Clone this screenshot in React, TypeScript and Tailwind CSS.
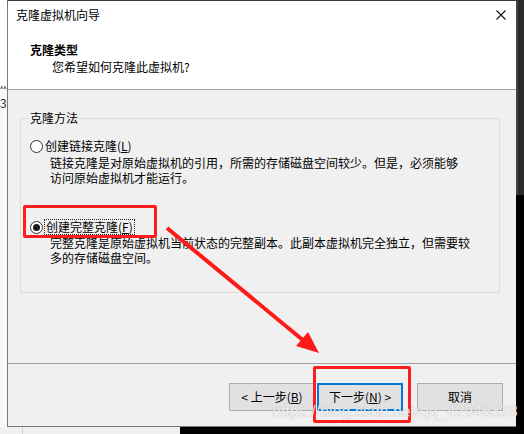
import React from "react";

const cjk = "font-['Noto_Sans_CJK_SC','Microsoft_YaHei',sans-serif]";

function Radio({ checked }: { checked?: boolean }) {
    return (
        <span className="w-[13px] h-[13px] rounded-full border border-[#333] bg-white flex items-center justify-center shrink-0">
            {checked && <span className="w-[7px] h-[7px] rounded-full bg-[#1a1a1a]" />}
        </span>
    );
}

function Btn({ children, primary }: { children: React.ReactNode; primary?: boolean }) {
    return (
        <div
            className={
                primary
                    ? "w-[86px] h-[28px] flex items-center justify-center bg-[#e1e1e1] border-2 border-[#0078d7] text-[12px] leading-[16px] text-black"
                    : "w-[86px] h-[28px] flex items-center justify-center bg-[#e1e1e1] border border-[#adadad] text-[12px] leading-[16px] text-black"
            }
        >
            {children}
        </div>
    );
}

export default function App() {
    return (
        <div className={`relative w-[524px] h-[434px] overflow-hidden bg-black ${cjk}`}>
            <div className="flex h-[427px]">
                {/* window behind, left side */}
                <div className="w-[7px] bg-white overflow-hidden text-[12px] leading-[16px] text-[#333] pt-[75px] whitespace-nowrap">
                    <div className="h-[14px] border-b border-[#a0a0a0]">...</div>
                    <div className="bg-[#f7f7f7] pt-[6px] h-[340px]">3..</div>
                </div>

                {/* dialog */}
                <div className="w-[509px] flex flex-col border-l border-b border-[#7a7a7a] border-t border-t-[#3a3a3a] bg-[#f0f0f0] text-black">
                    <div className="h-[89px] bg-white border-b border-[#a0a0a0] relative">
                        <div className="pl-[8px] pt-[6px] text-[12px] leading-[16px]">克隆虚拟机向导</div>
                        <svg className="absolute right-[10px] top-[9px]" width="10" height="10" viewBox="0 0 10 10">
                            <path d="M0.5 0.5 L9.5 9.5 M9.5 0.5 L0.5 9.5" stroke="#111" strokeWidth="1.1" />
                        </svg>
                        <div className="pl-[22px] mt-[19px] text-[12px] leading-[16px] font-bold">克隆类型</div>
                        <div className="pl-[44px] mt-[1px] text-[12px] leading-[16px]">您希望如何克隆此虚拟机?</div>
                    </div>

                    <div className="h-[274px] border-b border-[#a0a0a0] pl-[12px] pt-[28px]">
                        <div className="relative w-[480px] h-[175px] border border-[#dcdcdc] text-[12px]">
                            <div className="absolute left-[8px] top-[-9px] px-[1px] bg-[#f0f0f0] leading-[16px]">克隆方法</div>
                            <div className="pt-[19px] pl-[9px] flex items-center gap-[2px] h-[35px] leading-[16px]">
                                <Radio />
                                <span>创建链接克隆(<span className="underline">L</span>)</span>
                            </div>
                            <div className="pl-[29px] mt-[1px] leading-[15px]">
                                <div>链接克隆是对原始虚拟机的引用，所需的存储磁盘空间较少。但是，必须能够</div>
                                <div>访问原始虚拟机才能运行。</div>
                            </div>
                            <div className="mt-[34px] pl-[9px] flex items-center gap-[1px] h-[16px] leading-[14px]">
                                <Radio checked />
                                <span className="border border-dotted border-[#222] px-[1px]">创建完整克隆(<span className="underline">F</span>)</span>
                            </div>
                            <div className="pl-[29px] leading-[15px]">
                                <div>完整克隆是原始虚拟机当前状态的完整副本。此副本虚拟机完全独立，但需要较</div>
                                <div>多的存储磁盘空间。</div>
                            </div>
                        </div>
                    </div>

                    <div className="flex-1 flex pt-[19px] pl-[221px] gap-[2px]">
                        <Btn>&lt; 上一步(<span className="underline">B</span>)</Btn>
                        <Btn primary>下一步(<span className="underline">N</span>) &gt;</Btn>
                        <div className="ml-[12px]">
                            <Btn>取消</Btn>
                        </div>
                    </div>
                </div>

                {/* dark window edge, right side */}
                <div className="w-[8px] flex flex-col">
                    <div className="h-[195px] bg-[#2b2b2b] border-l-2 border-[#444]" />
                    <div className="flex-1 bg-black" />
                </div>
            </div>

            <div className="flex h-[7px]">
                <div className="w-[180px] bg-[#f0f0f0] pl-[22px]">
                    <div className="w-px h-full bg-[#d0d0d0]" />
                </div>
                <div className="flex-1 bg-black" />
            </div>

            {/* annotations */}
            <div className="absolute left-[23px] top-[205px] w-[134px] h-[33px] border-[3px] border-[#ff1c1c] rounded-[2px]" />
            <div className="absolute left-[313px] top-[366px] w-[98px] h-[57px] border-[3px] border-[#ff1c1c] rounded-[2px]" />
            <svg className="absolute left-0 top-0" width="524" height="434" viewBox="0 0 524 434">
                <line x1="167" y1="228" x2="304" y2="341" stroke="#ff1a1a" strokeWidth="4" />
                <polygon points="319,353 296,346 308,332" fill="#ff1a1a" />
            </svg>

            <div className="absolute left-[272px] top-[402px] text-[16px] leading-[20px] text-white/85 font-['Liberation_Sans',Arial,sans-serif] [text-shadow:0_0_1px_rgba(0,0,0,0.35)] whitespace-nowrap">
                https://blog.csdn.net/qq_42946328
            </div>
        </div>
    );
}
